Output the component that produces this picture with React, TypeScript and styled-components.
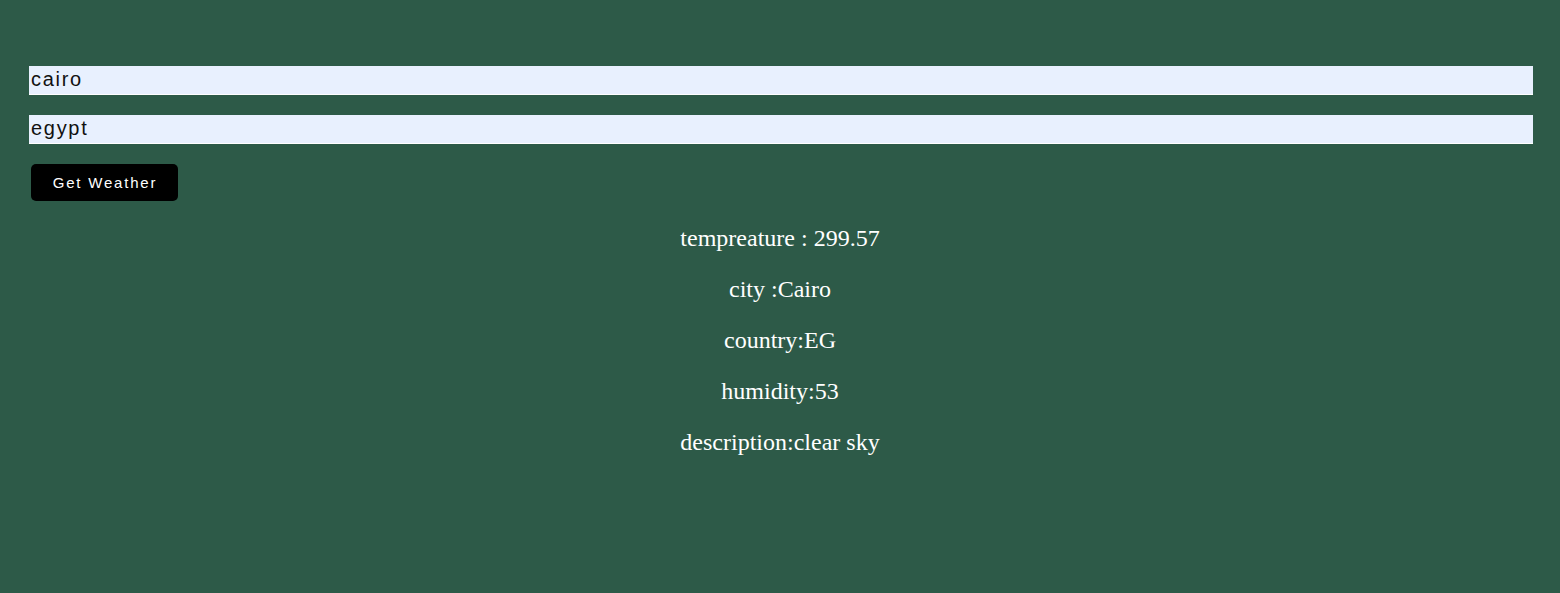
import React from "react";
import styled, { createGlobalStyle } from "styled-components";

const Global = createGlobalStyle`
  html, body { margin: 0; padding: 0; }
  body { background: #2d5a48; min-height: 593px; font-family: "Liberation Serif", "Times New Roman", serif; }
`;

const Page = styled.div`
  min-height: 593px;
  background: #2d5a48;
  padding-top: 66px;
  box-sizing: border-box;
`;

const Form = styled.form`
  display: flex;
  flex-direction: column;
  align-items: flex-start;
  gap: 20px;
  padding: 0 27px 0 29px;
`;

const Field = styled.input`
  box-sizing: border-box;
  width: 100%;
  height: 29px;
  margin: 0;
  padding: 0 2px 2px 2px;
  border: none;
  border-bottom: 1px solid #ffffff;
  background: #e8f0fe;
  color: #111111;
  font-family: "Liberation Sans", Arial, sans-serif;
  font-size: 20px;
  letter-spacing: 1.7px;
  outline: none;
`;

const Button = styled.button`
  box-sizing: border-box;
  width: 147px;
  height: 37px;
  margin-left: 2px;
  padding: 0 0 0 1px;
  border: none;
  border-radius: 5px;
  background: #000000;
  color: #ffffff;
  font-family: "Liberation Sans", Arial, sans-serif;
  font-size: 15px;
  letter-spacing: 1.8px;
  cursor: pointer;
`;

const Results = styled.div`
  display: flex;
  flex-direction: column;
  align-items: center;
  gap: 24px;
  margin-top: 24px;
`;

const Line = styled.p`
  margin: 0;
  color: #ffffff;
  font-family: "Liberation Serif", "Times New Roman", serif;
  font-size: 24px;
  line-height: 27px;
  text-align: center;
`;

export default function App() {
  const lines = [
    "tempreature : 299.57",
    "city :Cairo",
    "country:EG",
    "humidity:53",
    "description:clear sky",
  ];
  return (
    <Page>
      <Global />
      <Form onSubmit={(e) => e.preventDefault()}>
        <Field type="text" defaultValue="cairo" />
        <Field type="text" defaultValue="egypt" />
        <Button type="submit">Get Weather</Button>
      </Form>
      <Results>
        {lines.map((l) => (
          <Line key={l}>{l}</Line>
        ))}
      </Results>
    </Page>
  );
}
